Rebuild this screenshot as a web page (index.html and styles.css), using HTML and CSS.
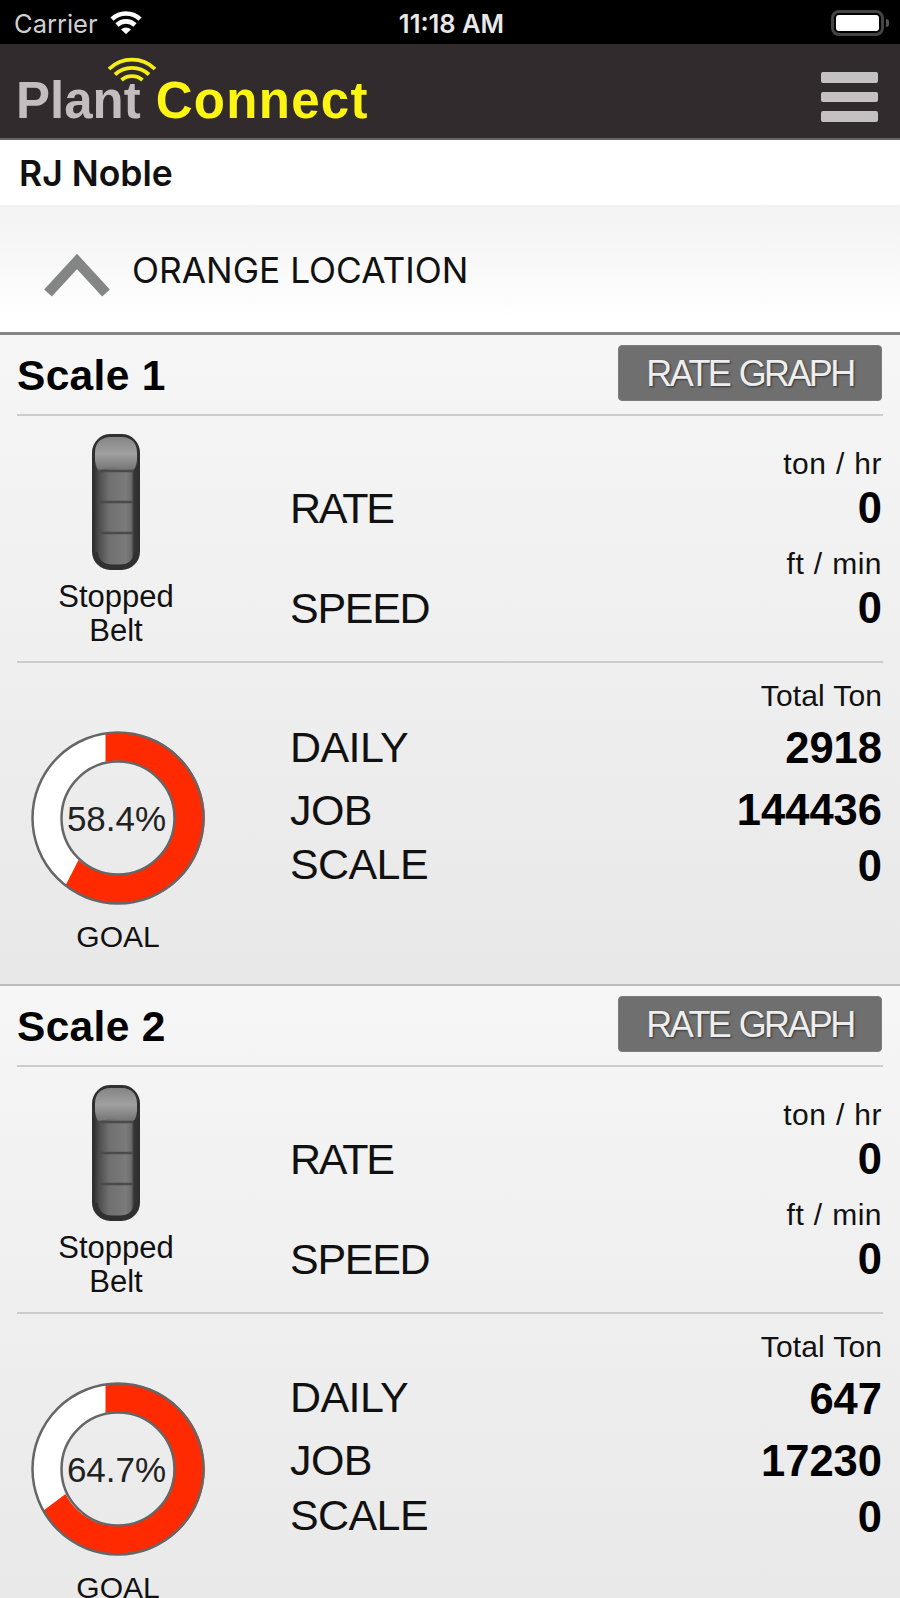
FILE: index.html
```html
<!DOCTYPE html>
<html lang="en">
<head>
    <meta charset="UTF-8">
    <meta name="viewport" content="width=device-width, initial-scale=1.0">
    <title>Plant Connect</title>
    <link rel="stylesheet" href="styles.css">
</head>
<body>
    <div class="status-bar">
        <div class="carrier">
            <span>Carrier</span>
            <svg width="32" height="24" viewBox="0 0 32 24" fill="none" stroke="#fff" stroke-width="4.6">
                <path d="M2 8.2a20 20 0 0 1 28 0"/>
                <path d="M7 14a13 13 0 0 1 18 0"/>
                <path d="M16 23l-5-4.600a7.400 7.400 0 0 1 10 0z" fill="#fff" stroke="none"/>
            </svg>
        </div>
        <div class="time">11:18 AM</div>
        <div class="battery"><div class="battery-body"><div class="battery-level"></div></div><div class="battery-tip"></div></div>
    </div>

    <header>
        <div class="logo">
            <span class="logo-plant">Plant</span><span class="logo-connect">Connect</span>
            <svg class="logo-waves" width="50" height="26" viewBox="0 0 50 26" fill="none" stroke="#f7ee17" stroke-width="3.8">
                <path d="M2 13a33 33 0 0 1 46 0"/>
                <path d="M8 18.500a25 25 0 0 1 34 0"/>
                <path d="M14.500 24a16 16 0 0 1 21 0"/>
            </svg>
        </div>
        <button class="menu" aria-label="Menu"><i></i><i></i><i></i></button>
    </header>

    <div class="company">RJ Noble</div>

    <div class="location">
        <svg width="68" height="48" viewBox="0 0 68 48" fill="none" stroke="#848686" stroke-width="10.500">
            <path d="M5 42L34 10.500 63 42"/>
        </svg>
        <span>ORANGE LOCATION</span>
    </div>

    <main>
        <section class="card">
            <div class="card-head">
                <h2>Scale 1</h2>
                <button class="rate-graph"><span>RATE GRAPH</span></button>
            </div>
            <div class="rates">
                <div class="belt">
                    <svg width="48" height="136" viewBox="0 0 48 136">
                        <defs>
                            <linearGradient id="side" x1="0" x2="1" y1="0" y2="0">
                                <stop offset="0" stop-color="#303030"/>
                                <stop offset=".14" stop-color="#505050"/>
                                <stop offset=".35" stop-color="#707070"/>
                                <stop offset=".72" stop-color="#7a7a7a"/>
                                <stop offset=".84" stop-color="#6c6c6c"/>
                                <stop offset=".9" stop-color="#333"/>
                                <stop offset="1" stop-color="#333"/>
                            </linearGradient>
                            <linearGradient id="shine" x1="0" x2="0" y1="0" y2="1">
                                <stop offset="0" stop-color="#848484"/>
                                <stop offset=".5" stop-color="#a0a0a0"/>
                                <stop offset="1" stop-color="#757575"/>
                            </linearGradient>
                        </defs>
                        <rect x="1.500" y="1.500" width="45" height="133" rx="17" fill="url(#side)" stroke="#303030" stroke-width="3"/>
                        <path d="M3 26V19Q3 3 20 3h8q17 0 17 16v7q-1 10-5 10-16-5-32 0-4 0-5-10z" fill="url(#shine)"/>
                        <path d="M8 37h33M8 68h33M8 99h33" stroke="#4a4a4a" stroke-width="2.500"/>
                        <path d="M4 118q2 14 16 14h8q14 0 16-14" fill="none" stroke="#303030" stroke-width="3"/>
                    </svg>
                    <p>Stopped<br>Belt</p>
                </div>
                <div class="metrics">
                    <div class="rate-row"><span class="label label-rate">RATE</span><div><p class="unit">ton / hr</p><p class="value">0</p></div></div>
                    <div class="rate-row"><span class="label">SPEED</span><div><p class="unit">ft / min</p><p class="value">0</p></div></div>
                </div>
            </div>
            <div class="totals">
                <div class="goal">
                    <svg width="174" height="174" viewBox="-87 -87 174 174">
                        <circle r="71.500" fill="none" stroke="#fff" stroke-width="29"/>
                        <path d="M-12.500 -85A86 86 0 1 1 -52.500 67.500L-39.500 42A57 57 0 1 0 -12.500 -56z" fill="#ff2a00"/>
                        <circle r="85.500" fill="none" stroke="#666" stroke-width="2.500"/>
                        <circle r="56.500" fill="none" stroke="#666" stroke-width="2.500"/>
                        <text x="-1.500" y="13">58.4%</text>
                    </svg>
                    <p>GOAL</p>
                </div>
                <div class="metrics">
                    <p class="unit unit-total">Total Ton</p>
                    <div class="total-row daily"><span class="label">DAILY</span><span class="value">2918</span></div>
                    <div class="total-row job"><span class="label">JOB</span><span class="value">144436</span></div>
                    <div class="total-row scale"><span class="label">SCALE</span><span class="value">0</span></div>
                </div>
            </div>
        </section>

        <section class="card">
            <div class="card-head">
                <h2>Scale 2</h2>
                <button class="rate-graph"><span>RATE GRAPH</span></button>
            </div>
            <div class="rates">
                <div class="belt">
                    <svg width="48" height="136" viewBox="0 0 48 136">
                        <rect x="1.500" y="1.500" width="45" height="133" rx="17" fill="url(#side)" stroke="#303030" stroke-width="3"/>
                        <path d="M3 26V19Q3 3 20 3h8q17 0 17 16v7q-1 10-5 10-16-5-32 0-4 0-5-10z" fill="url(#shine)"/>
                        <path d="M8 37h33M8 68h33M8 99h33" stroke="#4a4a4a" stroke-width="2.500"/>
                        <path d="M4 118q2 14 16 14h8q14 0 16-14" fill="none" stroke="#303030" stroke-width="3"/>
                    </svg>
                    <p>Stopped<br>Belt</p>
                </div>
                <div class="metrics">
                    <div class="rate-row"><span class="label label-rate">RATE</span><div><p class="unit">ton / hr</p><p class="value">0</p></div></div>
                    <div class="rate-row"><span class="label">SPEED</span><div><p class="unit">ft / min</p><p class="value">0</p></div></div>
                </div>
            </div>
            <div class="totals">
                <div class="goal">
                    <svg width="174" height="174" viewBox="-87 -87 174 174">
                        <circle r="71.500" fill="none" stroke="#fff" stroke-width="29"/>
                        <path d="M-12.500 -85A86 86 0 1 1 -74.500 41.500L-52.500 25A57 57 0 1 0 -12.500 -56z" fill="#ff2a00"/>
                        <circle r="85.500" fill="none" stroke="#666" stroke-width="2.500"/>
                        <circle r="56.500" fill="none" stroke="#666" stroke-width="2.500"/>
                        <text x="-1.500" y="13">64.7%</text>
                    </svg>
                    <p>GOAL</p>
                </div>
                <div class="metrics">
                    <p class="unit unit-total">Total Ton</p>
                    <div class="total-row daily"><span class="label">DAILY</span><span class="value">647</span></div>
                    <div class="total-row job"><span class="label">JOB</span><span class="value">17230</span></div>
                    <div class="total-row scale"><span class="label">SCALE</span><span class="value">0</span></div>
                </div>
            </div>
        </section>
    </main>
</body>
</html>
```
FILE: styles.css
```css
* {
    box-sizing: border-box;
}
body {
    margin: 0;
    height: 1598px;
    overflow: hidden;
    font-family: "Liberation Sans", Arial, sans-serif;
    color: #111;
    background: #fff;
}
p, h2 {
    margin: 0;
}
button {
    border: none;
    padding: 0;
    cursor: pointer;
}
svg {
    display: block;
}
.status-bar {
    display: grid;
    grid-template-columns: 1fr auto 1fr;
    align-items: center;
    height: 44px;
    padding: 2px 11px 0 14px;
    background: #000;
    color: #fff;
    font-family: Inter, sans-serif;
    font-size: 25.5px;
}
.carrier {
    display: flex;
    align-items: center;
    gap: 12px;
    color: #d0d0d0;
}
.time {
    font-weight: 600;
    color: #e8e8e8;
}
.battery {
    display: flex;
    align-items: center;
    justify-content: flex-end;
    gap: 2px;
}
.battery-body {
    width: 53px;
    height: 26px;
    padding: 2px;
    border: 3px solid #444;
    border-radius: 8px;
}
.battery-level {
    height: 100%;
    background: #fff;
    border-radius: 3px;
}
.battery-tip {
    width: 3px;
    height: 8px;
    background: #555;
    border-radius: 0 3px 3px 0;
}
header {
    display: flex;
    justify-content: space-between;
    height: 96px;
    padding: 28px 22px 0 16px;
    background: #312b2d;
    border-bottom: 2px solid #666;
}
.logo {
    position: relative;
    display: flex;
    gap: 15px;
    font-size: 51px;
    line-height: 58px;
    font-weight: bold;
}
.logo-plant {
    color: #c3bdbf;
}
.logo-connect {
    color: #fcf413;
    letter-spacing: 1.3px;
}
/* signal waves over the "t" */
.logo-waves {
    position: absolute;
    left: 91px;
    top: -16px;
}
.menu {
    display: flex;
    flex-direction: column;
    gap: 9px;
    height: 50px;
    background: none;
}
.menu i {
    width: 57px;
    height: 10.5px;
    background: #c5c0c2;
    border-radius: 2px;
}
.company {
    height: 65px;
    padding-left: 19px;
    font-family: Inter, sans-serif;
    font-size: 35.5px;
    line-height: 67px;
    font-weight: 600;
}
.location {
    display: flex;
    align-items: center;
    gap: 21px;
    height: 130px;
    padding-left: 43px;
    background: linear-gradient(#f3f3f3, #f6f6f6 30%, #fff 90%);
    border-bottom: 3px solid #868686;
    font-family: Inter, sans-serif;
    font-size: 35.3px;
}
.location span {
    padding-top: 4px;
}
.location svg {
    margin-top: 12px;
}
.card {
    height: 650.5px;
    padding: 0 17px;
    background: linear-gradient(#f6f6f6, #e8e8e8);
    border-bottom: 2px solid #bcbcbc;
}
.card-head {
    display: flex;
    justify-content: space-between;
    height: 81px;
    padding: 10px 1px 0 0;
    border-bottom: 2px solid #ccc;
}
h2 {
    font-size: 42.5px;
    line-height: 62px;
    letter-spacing: 0.3px;
    color: #000;
}
.rate-graph {
    width: 264px;
    height: 56px;
    padding-top: 2px;
    background: #6f6f6f;
    border: 1px solid #7c7c7c;
    border-radius: 4px;
    color: #eee;
    font-family: "Liberation Sans", Arial, sans-serif;
    font-size: 36px;
    letter-spacing: -2.6px;
    word-spacing: 2px;
    text-shadow: 1px 1px 2px #333;
}
.rates, .totals {
    display: flex;
}
.rates {
    height: 247px;
    border-bottom: 2px solid #ccc;
}
.belt, .goal {
    display: flex;
    flex-direction: column;
    align-items: center;
    text-align: center;
    line-height: 34px;
}
.belt {
    width: 198px;
    padding-top: 18px;
    margin-right: 75px;
    font-size: 31px;
}
.belt p {
    margin-top: 10px;
}
.goal {
    width: 202px;
    padding-top: 68px;
    margin-right: 71px;
    font-size: 30px;
}
.goal p {
    margin-top: 15px;
}
.goal text {
    font-size: 35px;
    text-anchor: middle;
    fill: #222;
}
.metrics {
    flex: 1;
    text-align: right;
}
.rates .metrics {
    padding-top: 26px;
}
.totals .metrics {
    padding-top: 11px;
}
.rate-row {
    display: flex;
    justify-content: space-between;
    align-items: flex-end;
    margin-bottom: 12px;
}
.total-row {
    display: flex;
    justify-content: space-between;
    align-items: center;
}
.daily {
    height: 60px;
}
.job {
    height: 64px;
}
.scale {
    height: 48px;
}
.label {
    font-size: 43px;
    line-height: 44px;
    letter-spacing: -1.3px;
}
.label-rate {
    letter-spacing: -2.2px;
}
.total-row .label {
    padding-bottom: 3px;
    letter-spacing: -0.6px;
}
.job .label {
    padding-bottom: 1px;
}
.scale .label {
    padding-bottom: 4px;
}
.unit {
    padding-right: 1px;
    font-size: 30px;
    line-height: 44px;
    letter-spacing: 0.5px;
    word-spacing: 0.7px;
}
.unit-total {
    letter-spacing: 0.1px;
}
.value {
    padding-right: 1px;
    font-size: 43.5px;
    line-height: 44px;
    font-weight: bold;
    color: #000;
}
```
